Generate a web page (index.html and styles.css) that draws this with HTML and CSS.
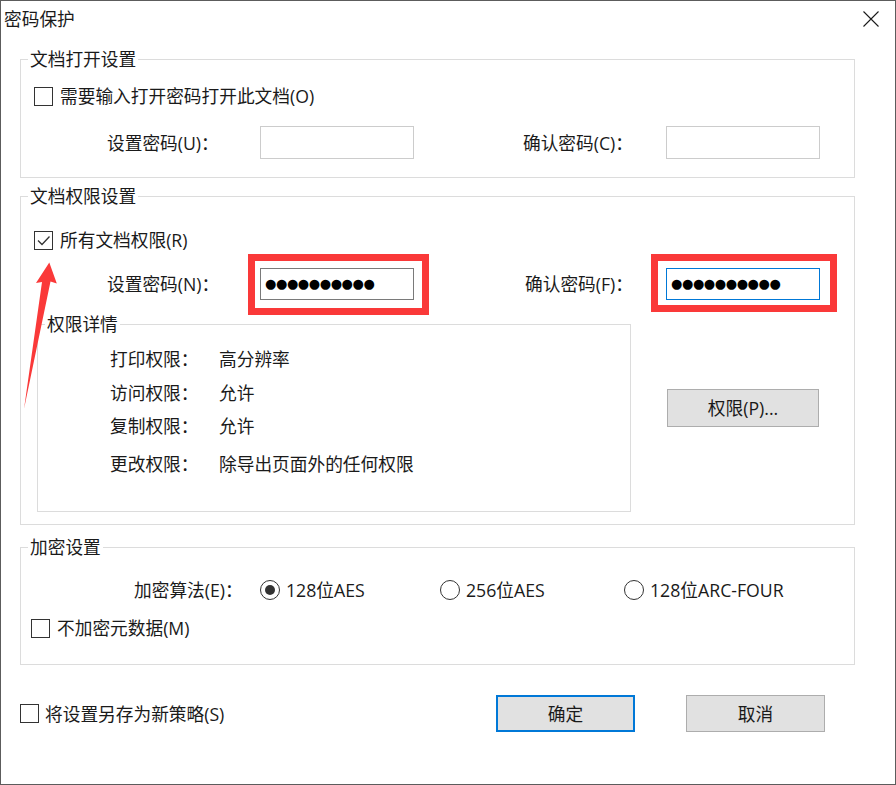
FILE: index.html
```html
<!DOCTYPE html>
<html lang="zh-CN">
<head>
    <meta charset="UTF-8">
    <title>密码保护</title>
    <link rel="stylesheet" href="styles.css">
</head>
<body>
<div class="dialog">
    <div class="titlebar">
        <span class="title">密码保护</span>
        <svg class="close" viewBox="0 0 16 16"><path d="M0.5 0.5L15.5 15.5M15.5 0.5L0.5 15.5"/></svg>
    </div>

    <div class="content">
        <fieldset class="group group-open">
            <legend>文档打开设置</legend>
            <div class="check-row">
                <span class="checkbox"></span>
                <span>需要输入打开密码打开此文档(O)</span>
            </div>
            <div class="pw-row">
                <span class="lbl">设置密码(U)：</span>
                <span class="field"></span>
                <span class="lbl lbl-right">确认密码(C)：</span>
                <span class="field"></span>
            </div>
        </fieldset>

        <fieldset class="group group-perm">
            <legend>文档权限设置</legend>
            <div class="check-row">
                <span class="checkbox">
                    <svg viewBox="0 0 17 17"><path d="M3 8.5L7 12.5L14.5 4.5"/></svg>
                </span>
                <span>所有文档权限(R)</span>
            </div>
            <div class="pw-row pw-row-sm">
                <span class="lbl">设置密码(N)：</span>
                <span class="mark mark-left">
                    <span class="field field-filled"><span class="dots">●●●●●●●●●●</span></span>
                </span>
                <span class="lbl lbl-right">确认密码(F)：</span>
                <span class="mark mark-right">
                    <span class="field field-focus"><span class="dots">●●●●●●●●●●</span></span>
                </span>
            </div>
            <div class="detail-wrap">
                <fieldset class="group group-detail">
                    <legend>权限详情</legend>
                    <div class="detail-row"><span class="dlbl">打印权限：</span><span>高分辨率</span></div>
                    <div class="detail-row"><span class="dlbl">访问权限：</span><span>允许</span></div>
                    <div class="detail-row"><span class="dlbl">复制权限：</span><span>允许</span></div>
                    <div class="detail-row detail-last"><span class="dlbl">更改权限：</span><span>除导出页面外的任何权限</span></div>
                </fieldset>
                <button class="btn btn-perm">权限(P)...</button>
            </div>
        </fieldset>

        <fieldset class="group group-enc">
            <legend>加密设置</legend>
            <div class="radio-row">
                <span class="algo-lbl">加密算法(E)：</span>
                <span class="radio-opt opt-1"><span class="radio on"></span>128位AES</span>
                <span class="radio-opt opt-2"><span class="radio"></span>256位AES</span>
                <span class="radio-opt"><span class="radio"></span>128位ARC-FOUR</span>
            </div>
            <div class="check-row check-meta">
                <span class="checkbox"></span>
                <span>不加密元数据(M)</span>
            </div>
        </fieldset>

        <div class="footer">
            <div class="check-row check-save">
                <span class="checkbox"></span>
                <span>将设置另存为新策略(S)</span>
            </div>
            <div class="actions">
                <button class="btn btn-ok">确定</button>
                <button class="btn">取消</button>
            </div>
        </div>
    </div>

    <!-- annotation arrow -->
    <svg class="arrow" viewBox="0 0 896 785">
        <polygon points="49.3,262.5 56.8,283.5 50.5,281.5 24,409 42,282 36,283"/>
    </svg>
</div>
</body>
</html>
```

FILE: styles.css
```css
* {
    box-sizing: border-box;
}
body {
    margin: 0;
    background: #ffffff;
    font-family: "Open Sans", "Noto Sans CJK SC", sans-serif;
    font-size: 17.7px;
    line-height: 20px;
    color: #1a1a1a;
}
.dialog {
    position: relative;
    width: 896px;
    height: 785px;
    border: 1px solid #5c5c5c;
    background: #ffffff;
}
.titlebar {
    display: flex;
    align-items: center;
    height: 36px;
    padding: 0 16px 0 3px;
}
.close {
    margin-left: auto;
    width: 16px;
    height: 16px;
    fill: none;
    stroke: #1a1a1a;
    stroke-width: 1.1;
}
.content {
    padding: 12px 40px 0 19px;
}

/* group boxes */
.group {
    margin: 0;
    padding: 0;
    min-width: 0;
    border: 1px solid #dcdcdc;
}
.group legend {
    margin-left: 7px;
    padding: 0 2px;
    line-height: 20px;
}
.group-open {
    padding-bottom: 18px;
}
.group-perm {
    margin-top: 8px;
    padding-bottom: 12px;
}
.group-enc {
    margin-top: 12px;
    padding-bottom: 26px;
}

/* checkbox rows */
.check-row {
    display: flex;
    align-items: center;
    gap: 7px;
    height: 20px;
    margin: 17px 0 0 13px;
}
.group-perm .check-row {
    margin-top: 24px;
}
.checkbox {
    display: inline-flex;
    width: 19px;
    height: 19px;
    border: 1px solid #333333;
    background: #ffffff;
}
.checkbox svg {
    width: 17px;
    height: 17px;
    fill: none;
    stroke: #333333;
    stroke-width: 1.3;
}

/* password rows */
.pw-row {
    display: flex;
    align-items: center;
    height: 33px;
    margin-top: 20px;
    padding-left: 86px;
}
.pw-row-sm {
    height: 32px;
    margin-top: 18px;
}
.lbl {
    width: 153px;
    white-space: nowrap;
}
.lbl-right {
    width: 252px;
    padding-right: 33px;
    text-align: right;
}
.field {
    display: flex;
    align-items: center;
    width: 154px;
    height: 33px;
    border: 1px solid #cccccc;
    background: #ffffff;
}
.pw-row-sm .field {
    height: 32px;
}
.field-filled {
    border-color: #7a7a7a;
}
.field-focus {
    border-color: #0078d7;
}
.dots {
    padding-left: 4px;
    font-family: "DejaVu Sans", sans-serif;
    font-size: 13px;
    letter-spacing: -0.4px;
    color: #000000;
}

/* red annotation frames */
.mark {
    position: relative;
    display: inline-flex;
}
.mark::after {
    content: "";
    position: absolute;
    border: 7px solid #fa3939;
    pointer-events: none;
}
.mark-left::after {
    top: -14px;
    left: -12px;
    right: -15px;
    bottom: -15px;
}
.mark-right::after {
    top: -14px;
    left: -15px;
    right: -17px;
    bottom: -12px;
}

/* permission details */
.detail-wrap {
    display: flex;
    align-items: flex-start;
    margin-top: 14px;
}
.group-detail {
    width: 594px;
    margin-left: 16px;
    padding-bottom: 37px;
}
.detail-row {
    display: flex;
    height: 20px;
    margin-top: 14px;
    padding-left: 72px;
}
.detail-row:first-of-type {
    margin-top: 15px;
}
.detail-row:nth-of-type(3) {
    margin-top: 13px;
}
.detail-last {
    margin-top: 18px;
}
.dlbl {
    width: 109px;
}

/* buttons */
.btn {
    font: inherit;
    color: #1a1a1a;
    background: #e1e1e1;
    border: 1px solid #adadad;
    width: 139px;
    height: 37px;
    padding: 0;
}
.btn-perm {
    width: 152px;
    height: 38px;
    margin: 75px 0 0 36px;
}
.btn-ok {
    border: 2px solid #0078d7;
}

/* encryption */
.radio-row {
    display: flex;
    align-items: center;
    height: 20px;
    margin-top: 23px;
    padding-left: 113px;
}
.algo-lbl {
    width: 126px;
}
.radio-opt {
    display: flex;
    align-items: center;
    gap: 6px;
    white-space: nowrap;
}
.opt-1 {
    width: 180px;
}
.opt-2 {
    width: 184px;
}
.radio {
    display: inline-flex;
    align-items: center;
    justify-content: center;
    width: 20px;
    height: 20px;
    border: 1px solid #333333;
    border-radius: 50%;
}
.radio.on::after {
    content: "";
    width: 10px;
    height: 10px;
    border-radius: 50%;
    background: #333333;
}
.check-meta {
    margin: 18px 0 0 10px;
}

/* footer */
.footer {
    display: flex;
    align-items: center;
    height: 37px;
    margin-top: 30px;
}
.check-save {
    margin: 0;
    gap: 6px;
}
.actions {
    display: flex;
    gap: 51px;
    margin: 0 30px 0 auto;
}

.arrow {
    position: absolute;
    left: -1px;
    top: -1px;
    width: 896px;
    height: 785px;
    fill: #fa3939;
    pointer-events: none;
}
```
